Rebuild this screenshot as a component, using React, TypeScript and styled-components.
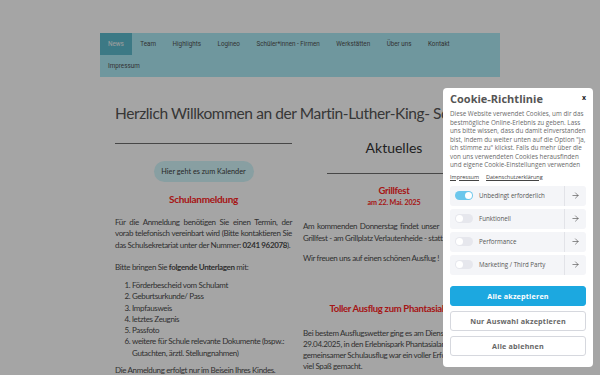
import styled, { createGlobalStyle } from "styled-components";
import { ArrowRight } from "lucide-react";

const navItems = [
  "News",
  "Team",
  "Highlights",
  "Logineo",
  "Schüler*innen - Firmen",
  "Werkstätten",
  "Über uns",
  "Kontakt",
  "Impressum",
];

const documents = [
  "Förderbescheid vom Schulamt",
  "Geburtsurkunde/ Pass",
  "Impfausweis",
  "letztes Zeugnis",
  "Passfoto",
  "weitere für Schule relevante Dokumente (bspw.: Gutachten, ärztl. Stellungnahmen)",
];

const categories = [
  { label: "Unbedingt erforderlich", on: true },
  { label: "Funktionell", on: false },
  { label: "Performance", on: false },
  { label: "Marketing / Third Party", on: false },
];

export default function App() {
  return (
    <>
      <GlobalStyle />
      <Page>
        <Nav>
          {navItems.map((item, i) => (
            <NavItem key={item} $active={i === 0}>
              {item}
            </NavItem>
          ))}
        </Nav>
        <Main>
          <Title>Herzlich Willkommen an der Martin-Luther-King- Schule</Title>
          <Columns>
            <Column>
              <Rule />
              <CalendarButton>Hier geht es zum Kalender</CalendarButton>
              <RedHeading>Schulanmeldung</RedHeading>
              <Para $justify>
                Für die Anmeldung benötigen Sie einen Termin, der vorab telefonisch vereinbart
                wird (Bitte kontaktieren Sie das Schulsekretariat unter der Nummer:{" "}
                <b>0241 962078</b>).
              </Para>
              <Para $gap={11}>
                Bitte bringen Sie <b>folgende Unterlagen</b> mit:
              </Para>
              <DocList>
                {documents.map((d) => (
                  <li key={d}>{d}</li>
                ))}
              </DocList>
              <Para $gap={6}>Die Anmeldung erfolgt nur im Beisein Ihres Kindes.</Para>
            </Column>
            <Column>
              <NewsTitle>Aktuelles</NewsTitle>
              <ShortRule />
              <NewsHeading>Grillfest</NewsHeading>
              <NewsDate>am 22. Mai. 2025</NewsDate>
              <NewsPara $gap={11.5}>
                <Stretched>Am kommenden Donnerstag findet unser</Stretched>
                <Line>Grillfest - am Grillplatz Verlautenheide - statt.</Line>
              </NewsPara>
              <NewsPara $gap={8}>
                <Line>Wir freuen uns auf einen schönen Ausflug !</Line>
              </NewsPara>
              <NewsHeading $gap={39}>Toller Ausflug zum Phantasialand</NewsHeading>
              <NewsPara $gap={13.5} $tight>
                <Line>Bei bestem Ausflugswetter ging es am Dienstag, den</Line>
                <Line>29.04.2025, in den Erlebnispark Phantasialand. Unser</Line>
                <Line>gemeinsamer Schulausflug war ein voller Erfolg und hat</Line>
                <Line>viel Spaß gemacht.</Line>
              </NewsPara>
            </Column>
          </Columns>
        </Main>
      </Page>

      <Overlay />

      <Dialog>
        <DialogHead>
          <DialogTitle>Cookie-Richtlinie</DialogTitle>
          <Close>x</Close>
        </DialogHead>
        <DialogText>
          Diese Website verwendet Cookies, um dir das bestmögliche Online-Erlebnis zu geben.
          Lass uns bitte wissen, dass du damit einverstanden bist, indem du weiter unten auf
          die Option "ja, ich stimme zu" klickst. Falls du mehr über die von uns verwendeten
          Cookies herausfinden und eigene Cookie-Einstellungen verwenden
        </DialogText>
        <Links>
          <a>Impressum</a>
          <a>Datenschutzerklärung</a>
        </Links>
        <Categories>
          {categories.map((c) => (
            <Category key={c.label}>
              <Toggle $on={c.on} />
              <CategoryLabel>{c.label}</CategoryLabel>
              <CategoryMore>
                <ArrowRight size={9} strokeWidth={1.6} />
              </CategoryMore>
            </Category>
          ))}
        </Categories>
        <Buttons>
          <DialogButton $primary>Alle akzeptieren</DialogButton>
          <DialogButton>Nur Auswahl akzeptieren</DialogButton>
          <DialogButton>Alle ablehnen</DialogButton>
        </Buttons>
      </Dialog>
    </>
  );
}

const GlobalStyle = createGlobalStyle`
  html, body {
    margin: 0;
    padding: 0;
    background: #fff;
  }
  body {
    width: 600px;
    height: 375px;
    overflow: hidden;
    font-family: Lato, "Noto Sans", sans-serif;
  }
`;

const Page = styled.div`
  width: 400px;
  margin: 0 auto;
  padding-top: 33px;
`;

const Nav = styled.nav`
  display: flex;
  flex-wrap: wrap;
  background: #aceaf5;
  font-family: Roboto, "Liberation Sans", sans-serif;
  font-size: 6.3px;
  color: #505050;
`;

const NavItem = styled.div<{ $active?: boolean }>`
  height: 22px;
  line-height: 22px;
  padding: 0 8.5px 0 8px;
  background: ${(p) => (p.$active ? "#5ebcce" : "transparent")};
  color: ${(p) => (p.$active ? "#f4f4f4" : "#505050")};
`;

const Main = styled.main`
  padding: 0 15px;
  color: #4c4c4c;
`;

const Title = styled.h1`
  margin: 26px 0 0;
  font-size: 15.5px;
  line-height: 20px;
  font-weight: 400;
  letter-spacing: -0.4px;
  color: #555;
  white-space: nowrap;
`;

const Columns = styled.div`
  display: grid;
  grid-template-columns: 177px 182px;
  column-gap: 11px;
  margin-top: 10px;
`;

const Column = styled.div`
  display: flex;
  flex-direction: column;
`;

const Rule = styled.div`
  height: 10px;
  border-bottom: 1px solid #6e6e6e;
`;

const CalendarButton = styled.div`
  align-self: center;
  margin-top: 17px;
  width: 100px;
  height: 21px;
  border-radius: 11px;
  background: #d2f6fa;
  color: #404040;
  font-size: 7.3px;
  line-height: 21px;
  text-align: center;
`;

const RedHeading = styled.h2`
  margin: 10px 0 0;
  font-size: 10px;
  line-height: 14px;
  font-weight: 700;
  letter-spacing: -0.3px;
  color: #ff2424;
  text-align: center;
`;

const Para = styled.p<{ $justify?: boolean; $gap?: number }>`
  margin: ${(p) => p.$gap ?? 10.5}px 0 0;
  font-size: 8px;
  line-height: 11.5px;
  letter-spacing: -0.35px;
  text-align: ${(p) => (p.$justify ? "justify" : "left")};
`;

const DocList = styled.ol`
  margin: 6.5px 0 0;
  padding-left: 17px;
  font-size: 8px;
  line-height: 11.3px;
  letter-spacing: -0.35px;
`;

const NewsTitle = styled.h2`
  margin: 6px 0 0;
  font-size: 14px;
  line-height: 18px;
  font-weight: 400;
  color: #333;
  text-align: center;
`;

const ShortRule = styled.div`
  align-self: center;
  width: 134px;
  height: 16px;
  border-bottom: 1px solid #6e6e6e;
`;

const NewsHeading = styled.h3<{ $gap?: number }>`
  margin: ${(p) => p.$gap ?? 11}px 0 0;
  font-size: 9.5px;
  line-height: 12px;
  font-weight: 700;
  letter-spacing: -0.3px;
  color: #ff2424;
  text-align: center;
  white-space: nowrap;
`;

const NewsDate = styled.div`
  font-size: 7.2px;
  line-height: 11px;
  font-weight: 700;
  letter-spacing: -0.15px;
  color: #ff2424;
  text-align: center;
`;

const NewsPara = styled.p<{ $gap: number; $tight?: boolean }>`
  margin: ${(p) => p.$gap}px 0 0;
  font-size: 8px;
  line-height: ${(p) => (p.$tight ? 11 : 12)}px;
  letter-spacing: -0.35px;
`;

const Line = styled.span`
  display: block;
  white-space: nowrap;
`;

const Stretched = styled.span`
  display: block;
  width: 136px;
  white-space: nowrap;
  text-align: justify;
  text-align-last: justify;
`;

const Overlay = styled.div`
  position: fixed;
  inset: 0;
  background: rgba(0, 0, 0, 0.353);
`;

const Dialog = styled.div`
  position: fixed;
  left: 443px;
  top: 88px;
  width: 150px;
  box-sizing: border-box;
  padding: 4px 7px 11px;
  background: #fff;
  border-radius: 4px;
  font-family: "Open Sans", "DejaVu Sans", sans-serif;
  color: #666;
`;

const DialogHead = styled.div`
  display: flex;
  justify-content: space-between;
  align-items: flex-start;
`;

const DialogTitle = styled.div`
  font-size: 11px;
  line-height: 14px;
  font-weight: 700;
  color: #555;
`;

const Close = styled.div`
  font-size: 7px;
  font-weight: 700;
  line-height: 8px;
  margin-top: 2px;
  color: #222;
`;

const DialogText = styled.p`
  margin: 4px 0 0;
  font-size: 6.3px;
  line-height: 8.5px;
  color: #6a6a6a;
`;

const Links = styled.div`
  display: flex;
  gap: 7px;
  margin-top: 4px;
  font-size: 5.5px;
  line-height: 7px;
  color: #444;

  a {
    text-decoration: underline;
  }
`;

const Categories = styled.div`
  display: flex;
  flex-direction: column;
  gap: 3px;
  margin-top: 5px;
`;

const Category = styled.div`
  display: flex;
  align-items: center;
  height: 20px;
  padding-left: 5px;
  background: #f4f5f8;
  border-radius: 3px;
`;

const Toggle = styled.div<{ $on: boolean }>`
  position: relative;
  width: 18px;
  height: 9.5px;
  border-radius: 5px;
  background: ${(p) => (p.$on ? "#6cc7ec" : "#e6e7ed")};

  &::after {
    content: "";
    position: absolute;
    top: 1.25px;
    left: ${(p) => (p.$on ? "9.5px" : "1.25px")};
    width: 7px;
    height: 7px;
    border-radius: 50%;
    background: #fff;
  }
`;

const CategoryLabel = styled.div`
  flex: 1;
  margin-left: 6px;
  font-size: 6.2px;
  color: #555;
`;

const CategoryMore = styled.div`
  display: flex;
  align-items: center;
  justify-content: center;
  width: 21px;
  height: 100%;
  border-left: 1px solid #e2e3e8;
  color: #444;
`;

const Buttons = styled.div`
  display: flex;
  flex-direction: column;
  gap: 5px;
  margin-top: 11px;
`;

const DialogButton = styled.div<{ $primary?: boolean }>`
  height: 20px;
  box-sizing: border-box;
  border-radius: 3px;
  border: 1px solid ${(p) => (p.$primary ? "#1ca8e0" : "#d6d8de")};
  background: ${(p) => (p.$primary ? "#1ca8e0" : "#fff")};
  color: ${(p) => (p.$primary ? "#fff" : "#666")};
  font-size: 7.2px;
  font-weight: 700;
  letter-spacing: 0.2px;
  line-height: 18px;
  text-align: center;
`;
